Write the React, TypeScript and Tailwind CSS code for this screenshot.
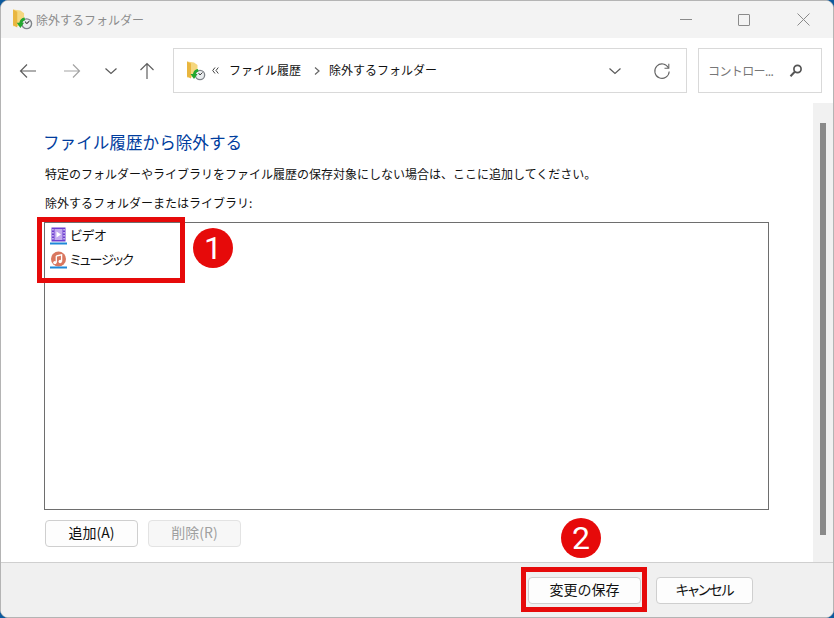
import type { ReactNode } from 'react';

const FONT = 'font-[Noto_Sans_CJK_JP,Noto_Sans,sans-serif]';

function HistoryIcon({ size = 26 }: { size?: number }) {
  return (
    <svg width={size} height={size} viewBox="0 0 20 20" className="shrink-0">
      <path d="M1 0.5 L8 1.5 L11.5 4 L11.5 16 L1 16.5 Z" fill="#f5d77e" />
      <path d="M1 0.5 L5 2.5 L5 17.5 L1 15.5 Z" fill="#e9b63f" />
      <circle cx="14" cy="14" r="5.3" fill="#7f8489" />
      <circle cx="14" cy="14" r="4" fill="#e9ecee" />
      <path d="M14 14 L16.5 11.5" stroke="#444" strokeWidth="1" />
      <path d="M14 14 L12.5 12" stroke="#444" strokeWidth="1" />
      <path d="M12 8 A6 6 0 0 0 7 13 L4.5 13 L8 18 L11.5 13 L9.6 13 A3.6 3.6 0 0 1 12.5 10.6 Z" fill="#22a82f" />
    </svg>
  );
}

function VideoIcon() {
  return (
    <svg width="17" height="18" viewBox="0 0 17 18" className="shrink-0">
      <rect x="1.5" y="0.5" width="14" height="14" fill="#6d3fd0" />
      <rect x="4.5" y="2" width="8" height="11" fill="#c3aaf0" />
      <path d="M6.5 4.5 L11 7.5 L6.5 10.5 Z" fill="#fff" />
      <g fill="#e4dbf8">
        <rect x="2.3" y="2" width="1.3" height="1.5" />
        <rect x="2.3" y="5" width="1.3" height="1.5" />
        <rect x="2.3" y="8" width="1.3" height="1.5" />
        <rect x="2.3" y="11" width="1.3" height="1.5" />
        <rect x="13.4" y="2" width="1.3" height="1.5" />
        <rect x="13.4" y="5" width="1.3" height="1.5" />
        <rect x="13.4" y="8" width="1.3" height="1.5" />
        <rect x="13.4" y="11" width="1.3" height="1.5" />
      </g>
      <rect x="0" y="15.5" width="17" height="2" fill="#1e88d8" />
    </svg>
  );
}

function MusicIcon() {
  return (
    <svg width="17" height="18" viewBox="0 0 17 18" className="shrink-0">
      <circle cx="8.5" cy="8" r="7.5" fill="#d9775f" />
      <path d="M6.3 5 L11.6 3.8 L11.6 10.4" fill="none" stroke="#fff" strokeWidth="1.3" />
      <path d="M6.3 5 L6.3 11.5" fill="none" stroke="#fff" strokeWidth="1.3" />
      <circle cx="4.9" cy="11.6" r="1.7" fill="#fff" />
      <circle cx="10.2" cy="10.5" r="1.7" fill="#fff" />
      <rect x="0" y="15.5" width="17" height="2" fill="#1e88d8" />
    </svg>
  );
}

function NavArrow({ d, color }: { d: string; color: string }) {
  return (
    <svg width="18" height="18" viewBox="0 0 18 18" fill="none" stroke={color} strokeWidth="1.2">
      <path d={d} />
    </svg>
  );
}

function Chevron() {
  return (
    <svg width="14" height="14" viewBox="0 0 14 14" fill="none" stroke="#5a5a5a" strokeWidth="1.2">
      <path d="M1.5 4.5 L7 9.5 L12.5 4.5" />
    </svg>
  );
}

function WinButton({ children, disabled, className }: { children: ReactNode; disabled?: boolean; className: string }) {
  return (
    <div
      className={`flex h-[27px] items-center justify-center rounded-[4px] border pb-[2px] text-[14px] ${className} ${
        disabled ? 'border-[#e3e3e3] bg-[#f7f7f7] text-[#a0a0a0]' : 'border-[#cfcfcf] bg-[#fdfdfd] text-[#111]'
      }`}
    >
      {children}
    </div>
  );
}

function Badge({ children, className }: { children: ReactNode; className: string }) {
  return (
    <div
      className={`absolute flex h-10 w-10 items-center justify-center rounded-full bg-[#e60a0a] font-[Roboto,sans-serif] text-[32px] leading-none text-white ${className}`}
    >
      {children}
    </div>
  );
}

export default function App() {
  return (
    <div className="h-[618px] w-[834px] bg-[#0c5a9e]">
      <div className={`relative flex h-full w-full flex-col overflow-hidden rounded-[8px] border border-[#b4b4b4] bg-white ${FONT}`}>
        {/* title bar */}
        <div className="flex h-[37px] shrink-0 items-center bg-[#f3f3f3] pl-[11px]">
          <HistoryIcon size={21} />
          <span className="ml-[3px] text-[12px] text-[#8c8c8c]">除外するフォルダー</span>
          <div className="ml-auto flex items-center pr-[23px]">
            <div className="h-px w-[12px] bg-[#8a8a8a]" />
            <div className="ml-[46px] h-[12px] w-[12px] rounded-[1px] border border-[#8a8a8a]" />
            <svg width="13" height="13" viewBox="0 0 13 13" className="ml-[47px]" stroke="#8a8a8a" strokeWidth="1">
              <path d="M0.5 0.5 L12.5 12.5 M12.5 0.5 L0.5 12.5" />
            </svg>
          </div>
        </div>

        {/* toolbar */}
        <div className="flex h-[65px] shrink-0 items-center pl-[18px]">
          <NavArrow d="M17 9 L1.5 9 M8 2.5 L1.5 9 L8 15.5" color="#5f5f5f" />
          <div className="ml-[26px]">
            <NavArrow d="M1 9 L16.5 9 M10 2.5 L16.5 9 L10 15.5" color="#a3a3a3" />
          </div>
          <div className="ml-[23px]">
            <Chevron />
          </div>
          <div className="ml-[20px]">
            <NavArrow d="M9 17 L9 1.5 M2.5 8 L9 1.5 L15.5 8" color="#5f5f5f" />
          </div>
          <div className="ml-[17px] flex h-[45px] w-[514px] items-center border border-[#d9d9d9] pl-[12px] pr-[15px] text-[12px] text-[#111]">
            <HistoryIcon size={20} />
            <svg width="7" height="7" viewBox="0 0 7 7" fill="none" stroke="#444" strokeWidth="1" className="ml-[6px]">
              <path d="M3 0.5 L0.7 3.5 L3 6.5 M6.3 0.5 L4 3.5 L6.3 6.5" />
            </svg>
            <span className="ml-[10px] pb-[2px]">ファイル履歴</span>
            <svg width="8" height="10" viewBox="0 0 8 10" fill="none" stroke="#666" strokeWidth="1.2" className="ml-[12px]">
              <path d="M2 1.5 L6 5 L2 8.5" />
            </svg>
            <span className="ml-[8px] pb-[2px]">除外するフォルダー</span>
            <div className="ml-auto">
              <Chevron />
            </div>
            <svg width="18" height="18" viewBox="0 0 18 18" fill="none" stroke="#666" strokeWidth="1.1" className="ml-[31px]">
              <path d="M15.5 6 A7.2 7.2 0 1 0 16.2 9.5" />
              <path d="M11.5 6.2 L15.8 6.2 L15.8 1.8" />
            </svg>
          </div>
          <div className="ml-[11px] flex h-[45px] w-[124px] items-center border border-[#d9d9d9] pl-[9px] pr-[17px] text-[12px] text-[#777]">
            <span className="tracking-[-0.6px]">コントロー...</span>
            <svg width="16" height="16" viewBox="0 0 16 16" fill="none" stroke="#555" className="ml-auto">
              <circle cx="9.5" cy="6" r="3.6" strokeWidth="1.7" />
              <path d="M6.8 8.8 L2.5 13.3" strokeWidth="2" />
            </svg>
          </div>
        </div>

        {/* content */}
        <div className="flex min-h-0 flex-1">
          <div className="flex min-w-0 flex-1 flex-col pl-[43px] pr-[44px]">
            <h1 className="ml-[-1px] mt-[26px] h-[26px] text-[16.6px] leading-[26px] font-normal text-[#003d9e]">ファイル履歴から除外する</h1>
            <p className="ml-px mt-[10px] h-[18px] text-[12px] leading-[18px] text-[#111]">
              特定のフォルダーやライブラリをファイル履歴の保存対象にしない場合は、ここに追加してください。
            </p>
            <p className="ml-px mt-[11px] h-[18px] text-[12px] leading-[18px] text-[#111]">除外するフォルダーまたはライブラリ:</p>
            <div className="mt-[10px] h-[288px] border border-[#6e6e6e] pl-[5px] pt-[2px] text-[13px] text-[#111] [font-feature-settings:'palt']">
              <div className="flex h-[22px] items-center gap-[3px]">
                <VideoIcon />
                <span className="pb-[2px]">ビデオ</span>
              </div>
              <div className="mt-[2px] flex h-[22px] items-center gap-[3px]">
                <MusicIcon />
                <span className="pb-[2px] tracking-[-1px]">ミュージック</span>
              </div>
            </div>
            <div className="ml-px mt-[10px] flex gap-[10px]">
              <WinButton className="w-[93px]">追加(A)</WinButton>
              <WinButton disabled className="w-[93px]">削除(R)</WinButton>
            </div>
          </div>
          <div className="flex w-[20px] shrink-0 justify-center bg-[#f1f1f1] pt-[20px] pb-[27px]">
            <div className="h-full w-[6px] bg-[#8a8a8a]" />
          </div>
        </div>

        {/* footer */}
        <div className="flex h-[55px] shrink-0 items-center justify-end gap-[15px] border-t border-[#cfcfcf] bg-[#f0f0f0] pr-[80px]">
          <WinButton className="w-[113px]">変更の保存</WinButton>
          <WinButton className="w-[97px] tracking-[-1.2px] [font-feature-settings:'palt']">キャンセル</WinButton>
        </div>

        {/* annotations */}
        <div className="absolute left-[36px] top-[216px] h-[66px] w-[148px] border-[5px] border-[#e60a0a]" />
        <Badge className="left-[192px] top-[227px]">1</Badge>
        <Badge className="left-[560px] top-[517px]">2</Badge>
        <div className="absolute left-[520px] top-[566px] h-[45px] w-[126px] border-[5px] border-[#e60a0a]" />
      </div>
    </div>
  );
}
